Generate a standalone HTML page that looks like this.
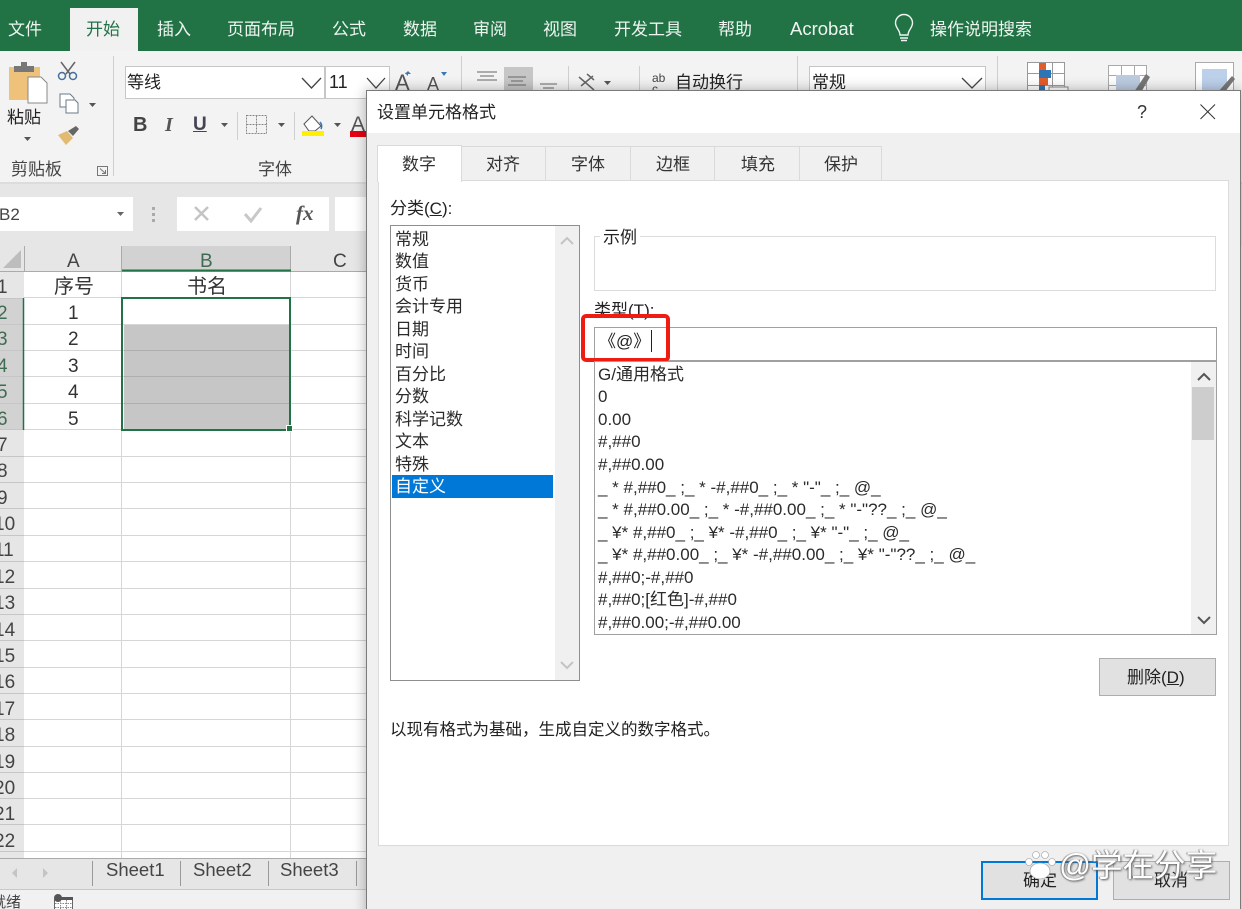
<!DOCTYPE html>
<html lang="zh"><head><meta charset="utf-8"><title>设置单元格格式</title>
<style>
html,body{margin:0;padding:0;background:#fff}
#p{position:relative;width:1242px;height:909px;overflow:hidden;background:#f1f1f1;font-family:"Liberation Sans","Noto Sans CJK SC",sans-serif;color:#222}
#p div{position:absolute;box-sizing:border-box}
.t{position:absolute;white-space:nowrap;line-height:1;font-size:17px}
svg{position:absolute;left:0;top:0}
.w{color:#eef5f0;top:21px}
.tab{top:156px;color:#333}
.li{left:395px;color:#2b2b2b}
.f{left:598px;color:#2b2b2b}
.rn{font-size:19px;color:#444;font-weight:normal;margin-top:1px}
.g{color:#3f6b52}
.cell{font-size:19px;color:#333;margin-top:1px}
</style></head><body><div id="p">

<!-- ribbon -->
<div style="left:0;top:0;width:1242px;height:51px;background:#217346"></div>
<div style="left:70px;top:8px;width:68px;height:43px;background:#f1f1f1"></div>
<div style="left:0;top:51px;width:1242px;height:133px;background:#f3f3f3;border-bottom:2px solid #dcdcdc"></div>
<span class="t w" style="left:8px">文件</span>
<span class="t" style="left:86px;top:21px;color:#217346">开始</span>
<span class="t w" style="left:157px">插入</span>
<span class="t w" style="left:227px">页面布局</span>
<span class="t w" style="left:332px">公式</span>
<span class="t w" style="left:403px">数据</span>
<span class="t w" style="left:473px">审阅</span>
<span class="t w" style="left:543px">视图</span>
<span class="t w" style="left:614px">开发工具</span>
<span class="t w" style="left:718px">帮助</span>
<span class="t w" style="left:790px;top:20px;font-size:18.500px">Acrobat</span>
<span class="t w" style="left:930px">操作说明搜索</span>

<div style="left:125px;top:66px;width:200px;height:33px;background:#fff;border:1px solid #c6c6c6"></div>
<div style="left:325px;top:66px;width:65px;height:33px;background:#fff;border:1px solid #c6c6c6"></div>
<div style="left:809px;top:66px;width:177px;height:33px;background:#fff;border:1px solid #c6c6c6"></div>
<div style="left:504px;top:67px;width:29px;height:30px;background:#c6c6c6"></div>
<span class="t" style="left:127px;top:74px">等线</span>
<span class="t" style="left:329px;top:73px;font-size:18px">11</span>
<span class="t" style="left:812px;top:74px">常规</span>
<span class="t" style="left:675px;top:74px">自动换行</span>
<span class="t" style="left:652px;top:72px;font-size:12px;color:#444">ab</span>
<span class="t" style="left:652px;top:83px;font-size:12px;color:#444">c</span>
<span class="t" style="left:7px;top:109px">粘贴</span>
<span class="t" style="left:11px;top:161px;color:#444">剪贴板</span>
<span class="t" style="left:258px;top:161px;color:#444">字体</span>
<span class="t" style="left:133px;top:115px;font-size:20px;font-weight:bold;color:#444">B</span>
<span class="t" style="left:165px;top:115px;font-size:20px;font-style:italic;font-family:'Liberation Serif',serif;font-weight:bold;color:#555">I</span>
<span class="t" style="left:193px;top:115px;font-size:19px;font-weight:bold;color:#445;text-decoration:underline">U</span>
<span class="t" style="left:395px;top:72px;font-size:22px;color:#555">A</span>
<span class="t" style="left:427px;top:75px;font-size:18px;color:#555">A</span>
<span class="t" style="left:351px;top:114px;font-size:21px;color:#555">A</span>

<svg width="1242" height="184">
 <g fill="none" stroke="#eef5f0" stroke-width="1.4"><path d="M900 35c0-5-4.500-7-4.500-12a8.500 8.500 0 0 1 17 0c0 5-4.500 7-4.500 12z"/><path d="M900 38h8M901 40.500h6"/></g>
 <path d="M113.500 56V176M461.500 56V176M797.500 56V176M997.500 56V176M568.500 66V96M639.500 66V96M237.500 112V140M294.500 112V140" stroke="#cfcfcf" fill="none"/>
 <path d="M302 78l9.500 10 9.500-10M367 78l9 10 9-10M962 78l10 10 10-10" fill="none" stroke="#444" stroke-width="1.300"/>
 <path d="M9 67h31v33H9z" fill="#eec27a"/><path d="M14 66h20v6H14z" fill="#777"/><path d="M21 62h6v4h-6z" fill="#777"/><path d="M28 77h13l6 6v20H28z" fill="#fff" stroke="#888"/>
 <g fill="none" stroke="#46709a" stroke-width="1.500"><circle cx="62" cy="76" r="3.500"/><circle cx="73" cy="76" r="3.500"/></g>
 <path d="M61 62l9 12M75 62l-9 12" stroke="#666" stroke-width="1.500"/>
 <path d="M60 94h10l4 4v9H60z" fill="#fff" stroke="#6a7a8a"/><path d="M66 100h9l3 3v10H66z" fill="#fff" stroke="#6a7a8a"/>
 <path d="M89 103h7l-3.500 4zM24 137h7l-3.500 4zM221 123h7l-3.500 4zM278 123h7l-3.500 4zM334 123h7l-3.500 4zM604 81h7l-3.500 4z" fill="#555"/>
 <path d="M58 135l9-4 6 7-7 7z" fill="#e2bb72"/><path d="M68 131l8-5 3 3-6 7z" fill="#666"/>
 <path d="M246.500 115.500h20v18h-20zM256.500 115.500v18M246.500 124.500h20" fill="none" stroke="#888" stroke-dasharray="2 1"/>
 <path d="M304 124l8-8 9 10-6 5h-6z" fill="#fff" stroke="#555"/><path d="M320 122c2 2 2 5 1 7" fill="none" stroke="#2e75b6" stroke-width="1.500"/>
 <rect x="302" y="131" width="22" height="5" fill="#ffef00"/>
 <rect x="350" y="131" width="17" height="6" fill="#e60012"/>
 <path d="M408 76l-3-3 3-1zM405 74l3-3 3 3M441 72h6l-3 4z" fill="#3a78b5"/>
 <path d="M477 72h20M480 76h14M477 80h20M508 77h18M511 81h12M508 85h18M540 84h17M543 88h11M540 92h17" stroke="#666" fill="none"/>
 <path d="M579 77l15 13M581 86l12-10M587 74l7 6" stroke="#666" stroke-width="1.500" fill="none"/>
 <path d="M1027.500 62.500h37v34h-37zM1027.500 73.500h37M1027.500 85.500h37M1039.500 62.500v34M1052.500 62.500v34" fill="#fff" stroke="#999"/>
 <rect x="1039" y="63" width="7" height="8" fill="#e35d2c"/><rect x="1039" y="70" width="12" height="8" fill="#2e75b6"/><rect x="1039" y="78" width="9" height="7" fill="#e35d2c"/><rect x="1039" y="85" width="6" height="6" fill="#2e75b6"/>
 <rect x="1049" y="87" width="19" height="9" fill="#fff" stroke="#888"/>
 <path d="M1108.500 65.500h38v28h-38zM1108.500 75.500h38M1108.500 85.500h38M1121.500 65.500v28M1134.500 65.500v28" fill="#fff" stroke="#aaa"/>
 <rect x="1116" y="75" width="24" height="18" fill="#bccbdf"/><path d="M1134 92l12-18 4 3-10 17z" fill="#777"/>
 <path d="M1195.500 62.500h38v32h-38z" fill="#fff" stroke="#aaa"/><rect x="1202" y="69" width="25" height="24" fill="#bcd0ea"/><path d="M1218 92l14-16 3 3-11 14z" fill="#777"/>
 <path d="M97.500 166.500h10v9h-10zM100 168.500l5.500 5M105.500 170v3.500h-3.500" fill="none" stroke="#777"/>
</svg>

<!-- formula bar -->
<div style="left:0;top:184px;width:1242px;height:62px;background:#e6e6e6"></div>
<div style="left:0;top:197px;width:133px;height:34px;background:#fff"></div>
<div style="left:177px;top:197px;width:152px;height:34px;background:#fff"></div>
<div style="left:335px;top:197px;width:150px;height:34px;background:#fff"></div>
<span class="t" style="left:-1px;top:206px;font-size:17px;color:#444">B2</span>
<span class="t" style="left:296px;top:203px;font-size:21px;font-family:'Liberation Serif',serif;font-style:italic;font-weight:bold;color:#555">fx</span>

<!-- grid -->
<div style="left:0;top:246px;width:367px;height:26px;background:#e6e6e6"></div>
<div style="left:0;top:272px;width:24px;height:586px;background:#e6e6e6"></div>
<div style="left:24px;top:272px;width:343px;height:586px;background:#fff"></div>
<div style="left:122px;top:246px;width:169px;height:25px;background:#d2d2d2"></div>
<div style="left:0;top:298px;width:24px;height:132px;background:#d2d2d2"></div>
<div style="left:124px;top:324px;width:165px;height:105px;background:#c6c6c6"></div>
<svg width="370" height="909">
 <path d="M3 268H21V250z" fill="#bdbdbd"/>
 <path d="M24 297.500H367M24 324.500H367M24 350.500H367M24 376.500H367M24 403.500H367M24 429.500H367M24 456.500H367M24 482.500H367M24 508.500H367M24 535.500H367M24 561.500H367M24 588.500H367M24 614.500H367M24 640.500H367M24 667.500H367M24 693.500H367M24 719.500H367M24 746.500H367M24 772.500H367M24 798.500H367M24 824.500H367M24 851.500H367M121.500 272V858M290.500 272V858" stroke="#d6d6d6" fill="none"/>
 <path d="M0 298.500H24M0 324.500H24M0 350.500H24M0 376.500H24M0 403.500H24M0 429.500H24M0 456.500H24M0 482.500H24M0 508.500H24M0 535.500H24M0 561.500H24M0 588.500H24M0 614.500H24M0 640.500H24M0 667.500H24M0 693.500H24M0 719.500H24M0 746.500H24M0 772.500H24M0 798.500H24M0 824.500H24M0 851.500H24" stroke="#c6c6c6" fill="none"/>
 <path d="M124 350.500H289M124 376.500H289M124 403.500H289" stroke="#aeaeae"/>
 <path d="M0 271.500H367M24.500 246V272M121.500 246V272M290.500 246V272" stroke="#ababab" fill="none"/>
 <path d="M122 270.500H291" stroke="#217346" stroke-width="2"/>
 <path d="M23.500 298V430" stroke="#217346" stroke-width="1.500"/>
 <rect x="122" y="298" width="168" height="132" fill="none" stroke="#217346" stroke-width="2"/>
 <rect x="286.500" y="425.500" width="6" height="6" fill="#217346" stroke="#fff"/>
 <path d="M117 212h7l-3.500 4z" fill="#666"/>
 <path d="M152 207h3v3h-3zM152 213h3v3h-3zM152 219h3v3h-3z" fill="#aaa"/>
 <path d="M195 207l13 13M208 207l-13 13" stroke="#c4c4c4" stroke-width="2.500"/>
 <path d="M245 214l6 7 10-13" fill="none" stroke="#c8c8c8" stroke-width="3"/>
</svg>
<span class="t rn" style="left:67px;top:251px">A</span>
<span class="t rn g" style="left:200px;top:251px">B</span>
<span class="t rn" style="left:333px;top:251px">C</span>
<span class="t cell" style="left:54px;top:276px;font-size:20px">序号</span>
<span class="t cell" style="left:187px;top:276px;font-size:20px">书名</span>
<span class="t cell" style="left:68px;top:303px">1</span>
<span class="t cell" style="left:68px;top:329px">2</span>
<span class="t cell" style="left:68px;top:356px">3</span>
<span class="t cell" style="left:68px;top:382px">4</span>
<span class="t cell" style="left:68px;top:409px">5</span>
<span class="t rn" style="left:-3px;top:277px">1</span>
<span class="t rn g" style="left:-3px;top:303px">2</span>
<span class="t rn g" style="left:-3px;top:329px">3</span>
<span class="t rn g" style="left:-3px;top:356px">4</span>
<span class="t rn g" style="left:-3px;top:382px">5</span>
<span class="t rn g" style="left:-3px;top:409px">6</span>
<span class="t rn" style="left:-3px;top:435px">7</span>
<span class="t rn" style="left:-3px;top:461px">8</span>
<span class="t rn" style="left:-3px;top:488px">9</span>
<span class="t rn" style="left:-6px;top:514px">10</span>
<span class="t rn" style="left:-6px;top:540px">11</span>
<span class="t rn" style="left:-6px;top:567px">12</span>
<span class="t rn" style="left:-6px;top:593px">13</span>
<span class="t rn" style="left:-6px;top:620px">14</span>
<span class="t rn" style="left:-6px;top:646px">15</span>
<span class="t rn" style="left:-6px;top:672px">16</span>
<span class="t rn" style="left:-6px;top:699px">17</span>
<span class="t rn" style="left:-6px;top:725px">18</span>
<span class="t rn" style="left:-6px;top:752px">19</span>
<span class="t rn" style="left:-6px;top:778px">20</span>
<span class="t rn" style="left:-6px;top:804px">21</span>
<span class="t rn" style="left:-6px;top:831px">22</span>

<!-- sheet tabs -->
<div style="left:0;top:858px;width:367px;height:32px;background:#e6e6e6;border-top:1px solid #aaa;border-bottom:1px solid #c8c8c8"></div>
<div style="left:0;top:890px;width:367px;height:19px;background:#f1f1f1"></div>
<span class="t" style="left:106px;top:861px;font-size:18.500px;color:#444">Sheet1</span>
<span class="t" style="left:193px;top:861px;font-size:18.500px;color:#444">Sheet2</span>
<span class="t" style="left:280px;top:861px;font-size:18.500px;color:#444">Sheet3</span>
<span class="t" style="left:-9px;top:895px;font-size:15px;color:#444">就绪</span>
<svg width="370" height="909">
 <path d="M92.500 861v25M180.500 861v25M268.500 861v25M356.500 861v25" stroke="#999"/>
 <path d="M17 868v10l-5-5zM43 868v10l5-5z" fill="#c4c4c4"/>
 <path d="M54.500 899.500h18v10h-18z" fill="#fff" stroke="#666"/>
 <path d="M55 903.500h17M55 907.500h17M60.500 900v9M66.500 900v9" stroke="#888" stroke-dasharray="1.500 1" fill="none"/>
 <rect x="61" y="897" width="12" height="3" fill="#555"/>
 <circle cx="58" cy="898" r="4" fill="#555"/>
</svg>

<!-- dialog -->
<div style="left:366px;top:90px;width:875px;height:830px;background:#f0f0f0;border:1px solid #7a7a7a;box-shadow:0 0 12px rgba(0,0,0,.3)"></div>
<div style="left:367px;top:91px;width:873px;height:42px;background:#fff"></div>
<span class="t" style="left:377px;top:104px">设置单元格格式</span>
<span class="t" style="left:1137px;top:103px;font-size:18px;color:#333">?</span>
<svg width="1242" height="140" style="z-index:1"><path d="M1200.500 104.500l14.500 14.500M1215 104.500l-14.500 14.500" stroke="#333" fill="none"/></svg>

<!-- tabs -->
<div style="left:378px;top:180px;width:851px;height:666px;background:#fff;border:1px solid #dadada"></div>
<div style="left:461px;top:146px;width:85px;height:35px;background:#f0f0f0;border:1px solid #dadada"></div>
<div style="left:545px;top:146px;width:86px;height:35px;background:#f0f0f0;border:1px solid #dadada"></div>
<div style="left:630px;top:146px;width:85px;height:35px;background:#f0f0f0;border:1px solid #dadada"></div>
<div style="left:714px;top:146px;width:86px;height:35px;background:#f0f0f0;border:1px solid #dadada"></div>
<div style="left:799px;top:146px;width:83px;height:35px;background:#f0f0f0;border:1px solid #dadada"></div>
<div style="left:377px;top:145px;width:85px;height:37px;background:#fff;border:1px solid #dadada;border-bottom:0"></div>
<span class="t tab" style="left:402px">数字</span>
<span class="t tab" style="left:486px">对齐</span>
<span class="t tab" style="left:571px">字体</span>
<span class="t tab" style="left:656px">边框</span>
<span class="t tab" style="left:741px">填充</span>
<span class="t tab" style="left:824px">保护</span>

<!-- category -->
<span class="t" style="left:390px;top:200px">分类(<u>C</u>):</span>
<div style="left:390px;top:225px;width:190px;height:456px;background:#fff;border:1px solid #8e8e8e"></div>
<div style="left:555px;top:226px;width:24px;height:454px;background:#f0f0f0"></div>
<div style="left:392px;top:475px;width:161px;height:23px;background:#0078d7"></div>
<span class="t li" style="top:231px">常规</span>
<span class="t li" style="top:253px">数值</span>
<span class="t li" style="top:276px">货币</span>
<span class="t li" style="top:298px">会计专用</span>
<span class="t li" style="top:321px">日期</span>
<span class="t li" style="top:343px">时间</span>
<span class="t li" style="top:366px">百分比</span>
<span class="t li" style="top:388px">分数</span>
<span class="t li" style="top:411px">科学记数</span>
<span class="t li" style="top:433px">文本</span>
<span class="t li" style="top:456px">特殊</span>
<span class="t li" style="top:478px;color:#fff">自定义</span>

<!-- sample -->
<div style="left:594px;top:236px;width:622px;height:55px;border:1px solid #dcdcdc;background:#fff"></div>
<span class="t" style="left:600px;top:229px;padding:0 3px;background:#fff;line-height:17px">示例</span>

<!-- type -->
<span class="t" style="left:594px;top:302px">类型(<u>T</u>):</span>
<div style="left:594px;top:327px;width:623px;height:34px;background:#fff;border:1px solid #a0a0a0"></div>
<span class="t" style="left:599px;top:333px">《@》</span>
<div style="left:651px;top:330px;width:1px;height:22px;background:#222"></div>
<div style="left:581px;top:314px;width:89px;height:48px;border:4px solid #ee1c12;border-radius:5px"></div>

<!-- formats -->
<div style="left:594px;top:361px;width:623px;height:274px;background:#fff;border:1px solid #a0a0a0"></div>
<div style="left:1191px;top:362px;width:25px;height:272px;background:#f0f0f0"></div>
<div style="left:1192px;top:387px;width:22px;height:53px;background:#cdcdcd"></div>
<span class="t f" style="top:366px">G/通用格式</span>
<span class="t f" style="top:388px">0</span>
<span class="t f" style="top:411px">0.00</span>
<span class="t f" style="top:433px">#,##0</span>
<span class="t f" style="top:456px">#,##0.00</span>
<span class="t f" style="top:479px">_ * #,##0_ ;_ * -#,##0_ ;_ * "-"_ ;_ @_</span>
<span class="t f" style="top:501px">_ * #,##0.00_ ;_ * -#,##0.00_ ;_ * "-"??_ ;_ @_</span>
<span class="t f" style="top:524px">_ ¥* #,##0_ ;_ ¥* -#,##0_ ;_ ¥* "-"_ ;_ @_</span>
<span class="t f" style="top:546px">_ ¥* #,##0.00_ ;_ ¥* -#,##0.00_ ;_ ¥* "-"??_ ;_ @_</span>
<span class="t f" style="top:569px">#,##0;-#,##0</span>
<span class="t f" style="top:591px">#,##0;[红色]-#,##0</span>
<span class="t f" style="top:614px">#,##0.00;-#,##0.00</span>

<svg width="1242" height="700">
 <path d="M561 244l6-6 6 6M561 662l6 6 6-6" fill="none" stroke="#c4c4c4" stroke-width="2"/>
 <path d="M1198 380l6-6 6 6M1198 617l6 6 6-6" fill="none" stroke="#555" stroke-width="2"/>
</svg>

<!-- buttons -->
<div style="left:1099px;top:658px;width:117px;height:38px;background:#e1e1e1;border:1px solid #adadad"></div>
<span class="t" style="left:1127px;top:669px">删除(<u>D</u>)</span>
<span class="t" style="left:390px;top:722px;font-size:16.500px">以现有格式为基础，生成自定义的数字格式。</span>
<div style="left:981px;top:861px;width:117px;height:39px;background:#e1e1e1;border:2px solid #0078d7"></div>
<div style="left:1113px;top:861px;width:117px;height:39px;background:#e1e1e1;border:1px solid #adadad"></div>
<span class="t" style="left:1023px;top:872px">确定</span>
<span class="t" style="left:1154px;top:872px">取消</span>

<!-- watermark -->
<svg width="1242" height="909"><g fill="#fff" stroke="#999" stroke-width=".6"><ellipse cx="1040" cy="871" rx="10" ry="8"/><circle cx="1029" cy="862" r="3.500"/><circle cx="1036" cy="855" r="3.500"/><circle cx="1045" cy="855" r="3.500"/><circle cx="1052" cy="862" r="3.500"/></g></svg>
<span class="t" style="left:1059px;top:850px;font-size:31.500px;color:#fff;text-shadow:1px 1px 2px #555,-1px 0 1px #888">@学在分享</span>

</div></body></html>
